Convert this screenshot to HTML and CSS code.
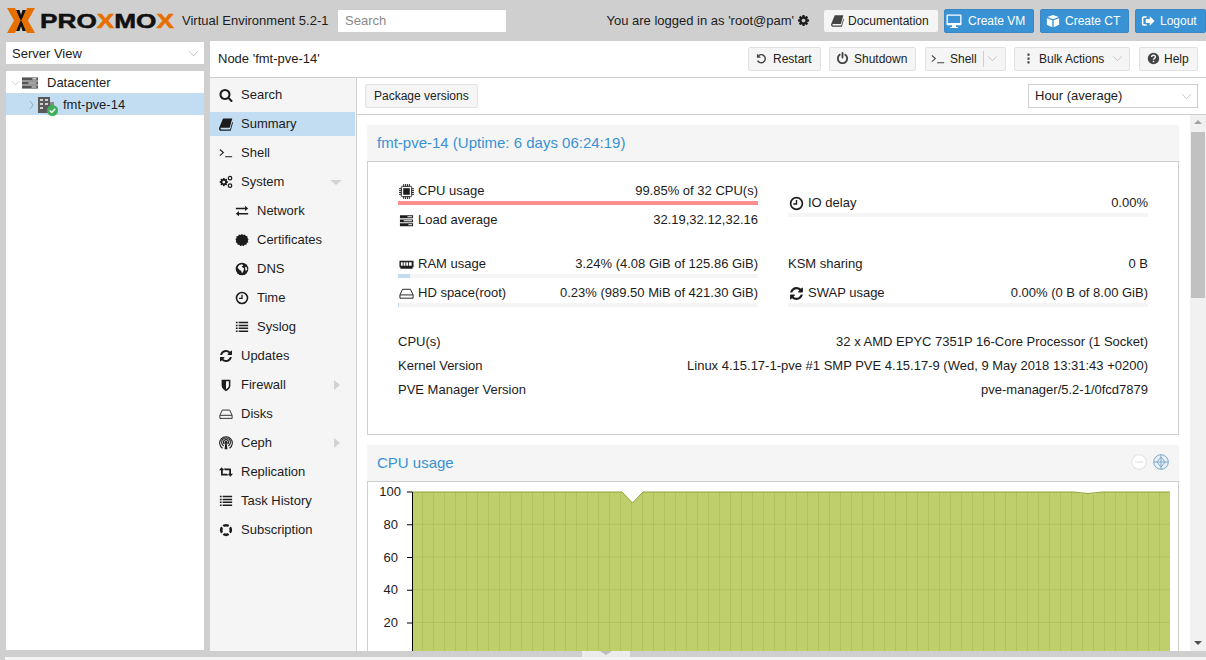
FILE: index.html
```html
<!DOCTYPE html>
<html lang="en">
<head>
<meta charset="utf-8">
<title>fmt-pve-14 - Proxmox Virtual Environment</title>
<link rel="stylesheet" href="styles.css">
</head>
<body>
<svg class="defs" aria-hidden="true">
  <defs>
    <symbol id="i-search" viewBox="0 0 1792 1792"><path d="M1216 832q0-185-131.5-316.5t-316.5-131.5-316.5 131.5-131.5 316.5 131.5 316.5 316.5 131.5 316.5-131.5 131.5-316.5zm512 832q0 52-38 90t-90 38q-54 0-90-38l-343-342q-179 124-399 124-143 0-273.5-55.5t-225-150-150-225-55.5-273.5 55.5-273.5 150-225 225-150 273.5-55.5 273.5 55.5 225 150 150 225 55.5 273.5q0 220-124 399l343 343q37 37 37 90z"/></symbol>
    <symbol id="i-cog" viewBox="0 0 1792 1792"><path d="M1152 896q0-106-75-181t-181-75-181 75-75 181 75 181 181 75 181-75 75-181zm512-109v222q0 12-8 23t-20 13l-185 28q-19 54-39 91 35 50 107 138 10 12 10 25t-9 23q-27 37-99 108t-94 71q-12 0-26-9l-138-108q-44 23-91 38-16 136-29 186-7 28-36 28h-222q-14 0-24.5-8.5t-11.5-21.5l-28-184q-49-16-90-37l-141 107q-10 9-25 9-14 0-25-11-126-114-165-168-7-10-7-23 0-12 8-23 15-21 51-66.5t54-70.5q-27-50-41-99l-183-27q-13-2-21-12.5t-8-23.5v-222q0-12 8-23t19-13l186-28q14-46 39-92-40-57-107-138-10-12-10-24 0-10 9-23 26-36 98.5-107.5t94.5-71.5q13 0 26 10l138 107q44-23 91-38 16-136 29-186 7-28 36-28h222q14 0 24.5 8.5t11.5 21.5l28 184q49 16 90 37l142-107q9-9 24-9 13 0 25 10 129 119 165 170 7 8 7 22 0 12-8 23-15 21-51 66.5t-54 70.5q26 50 41 98l183 28q13 2 21 12.5t8 23.5z"/></symbol>
    <symbol id="i-refresh" viewBox="0 0 1792 1792"><path d="M1639 1056q0 5-1 7-64 268-268 434.5t-478 166.5q-146 0-282.5-55t-243.5-157l-129 129q-19 19-45 19t-45-19-19-45v-448q0-26 19-45t45-19h448q26 0 45 19t19 45-19 45l-137 137q71 66 161 102t187 36q134 0 250-65t186-179q11-17 53-117 8-23 30-23h192q13 0 22.5 9.5t9.5 22.5zm25-800v448q0 26-19 45t-45 19h-448q-26 0-45-19t-19-45 19-45l138-138q-148-137-349-137-134 0-250 65t-186 179q-11 17-53 117-8 23-30 23h-199q-13 0-22.5-9.5t-9.5-22.5v-7q65-268 270-434.5t480-166.5q146 0 284 55.5t245 156.5l130-129q19-19 45-19t45 19 19 45z"/></symbol>
    <symbol id="i-power" viewBox="0 0 1792 1792"><path d="M1664 896q0 156-61 298t-164 245-245 164-298 61-298-61-245-164-164-245-61-298q0-182 80.5-343t226.5-270q43-32 95.5-25t83.5 50q32 42 24.5 94.5t-49.5 84.5q-98 74-151.5 181t-53.5 228q0 104 40.5 198.5t109.5 163.5 163.5 109.5 198.5 40.5 198.5-40.5 163.5-109.5 109.5-163.5 40.5-198.5q0-121-53.5-228t-151.5-181q-42-32-49.5-84.5t24.5-94.5q31-43 84-50t95 25q146 109 226.5 270t80.5 343zm-640-768v640q0 52-38 90t-90 38-90-38-38-90v-640q0-52 38-90t90-38 90 38 38 90z"/></symbol>
    <symbol id="i-undo" viewBox="0 0 16 16"><path d="M4.2 4.600A5 5 0 1 1 3.200 10.600" fill="none" stroke="currentColor" stroke-width="1.700"/><path d="M2.400 2.200v5h5z"/></symbol>
    <symbol id="i-book" viewBox="0 0 16 16"><path d="M4.600 1.600h10.600l-3 10.800H2c-.7 1.400.1 1.800 1 1.800h9.800l2.300-8.400.9.500-2.600 9.400H2.200C.4 15.700-.4 14 .2 12.200z"/></symbol>
    <symbol id="i-term" viewBox="0 0 16 16"><path d="M1 4l4 3.500L1 11M7 12.200h8" fill="none" stroke="currentColor" stroke-width="1.200"/></symbol>
    <symbol id="i-cogs" viewBox="0 0 16 16"><use href="#i-cog" width="11" height="11" x="0" y="2.500"/><circle cx="12.600" cy="3.600" r="2" fill="none" stroke="currentColor" stroke-width="1.400"/><circle cx="12.600" cy="12.200" r="2" fill="none" stroke="currentColor" stroke-width="1.400"/></symbol>
    <symbol id="i-exchange" viewBox="0 0 16 16"><path d="M1 4.200h10.500V2L15 5l-3.500 3V6H1zM15 10.200H4.500V8L1 11l3.500 3v-2H15z"/></symbol>
    <symbol id="i-cert" viewBox="0 0 16 16"><path d="M8 1l1.600 1.200 1.900-.6.800 1.800 2 .3-.1 2L15.500 7 14.600 8.800l.7 1.800-1.800.9-.4 2-2-.1L9.600 15 8 14l-1.600 1-1.500-1.600-2 .1-.4-2-1.800-.9.700-1.800L.500 7 1.800 5.700l-.1-2 2-.3.800-1.800 1.900.6z"/></symbol>
    <symbol id="i-globe" viewBox="0 0 16 16"><circle cx="8" cy="8" r="7.200"/><path d="M5 3.500l3-1 1.500 1.500-2 1.500 3 2-1 3-1.500 2.500-1-3-2.500-1.500-1.500-2.500zM11.500 5.500l2 .5.500 3-2 1z" fill="#f5f5f5"/></symbol>
    <symbol id="i-clock" viewBox="0 0 16 16"><circle cx="8" cy="8" r="6.300" fill="none" stroke="currentColor" stroke-width="1.800"/><path d="M8 4.200v4.300H4.600" fill="none" stroke="currentColor" stroke-width="1.500"/></symbol>
    <symbol id="i-list" viewBox="0 0 16 16"><path d="M1 2h2v1.800H1zM4.200 2H15v1.800H4.200zM1 5.300h2v1.800H1zM4.200 5.300H15v1.800H4.200zM1 8.600h2v1.800H1zM4.200 8.600H15v1.800H4.200zM1 11.900h2v1.800H1zM4.200 11.900H15v1.800H4.200z"/></symbol>
    <symbol id="i-shield" viewBox="0 0 16 16"><path d="M3 2h10v6.500c0 3.200-3 5.300-5 6.500-2-1.200-5-3.300-5-6.500z"/><path d="M8 3.800h3.300v4.700c0 2-1.800 3.400-3.300 4.400z" fill="#f5f5f5"/></symbol>
    <symbol id="i-hdd" viewBox="0 0 16 16"><path d="M3.800 3.500h8.400l2.800 6v3.500H1V9.500zM1.200 9.500h13.600M11 11.300h.1M13 11.300h.1" fill="none" stroke="currentColor" stroke-width="1"/></symbol>
    <symbol id="i-ceph" viewBox="0 0 16 16"><circle cx="8" cy="7.300" r="1.700"/><path d="M7.200 8.500h1.600l.9 6.500H6.300z"/><path d="M5.300 11.400A5 5 0 1 1 10.700 11.400M4 14A7.200 7.200 0 1 1 12 14M6.200 9.300a2.900 2.900 0 1 1 3.600 0" fill="none" stroke="currentColor" stroke-width="1.200"/></symbol>
    <symbol id="i-retweet" viewBox="0 0 16 16"><path d="M0 6l3-3.300L6 6H4.300v4H9l2 2H3.300a1 1 0 0 1-1-1V6zM16 10l-3 3.300L10 10h1.700V6H7L5 4h7.700a1 1 0 0 1 1 1v5z"/></symbol>
    <symbol id="i-support" viewBox="0 0 16 16"><circle cx="8" cy="8" r="5.500" fill="none" stroke="currentColor" stroke-width="3"/><path d="M3.500 1.800L6.300 5 5 6.300 1.800 3.500zM12.500 1.800L9.700 5 11 6.300l3.200-2.800zM3.500 14.200L6.300 11 5 9.700l-3.200 2.800zM12.500 14.200L9.700 11 11 9.700l3.200 2.800z" fill="#f5f5f5"/></symbol>
    <symbol id="i-question" viewBox="0 0 16 16"><circle cx="8" cy="8" r="7"/><path d="M5.700 6.300c0-3 4.700-3 4.700-.1 0 1.700-2.400 1.700-2.400 3.400" fill="none" stroke="#f5f5f5" stroke-width="1.700"/><path d="M7.100 10.800h1.800v1.800H7.100z" fill="#f5f5f5"/></symbol>
    <symbol id="i-dots" viewBox="0 0 16 16"><path d="M6.700 1.800h2.600v2.700H6.700zM6.700 6.700h2.600v2.700H6.700zM6.700 11.500h2.600v2.700H6.700z"/></symbol>
    <symbol id="i-desktop" viewBox="0 0 16 16"><path d="M1.500 1.500h13a1 1 0 0 1 1 1v8.800a1 1 0 0 1-1 1H9.700l.4 1.700h1.600v1H4.300v-1h1.600l.4-1.700H1.500a1 1 0 0 1-1-1V2.500a1 1 0 0 1 1-1zm.3 1.300v7.200h12.400V2.800z"/></symbol>
    <symbol id="i-cube" viewBox="0 0 16 16"><path d="M8 1l6.500 2.500L8 6 1.500 3.500zM1 4.800l6.200 2.400V15L1 12.200zM15 4.800L8.800 7.200V15l6.200-2.800z"/></symbol>
    <symbol id="i-signout" viewBox="0 0 16 16"><path d="M6.500 2.500H3a2 2 0 0 0-2 2v7a2 2 0 0 0 2 2h3.500v-1.700H3.400a.7.7 0 0 1-.7-.7V4.900c0-.4.300-.7.700-.7h3.100z"/><path d="M10 2.700L15.500 8 10 13.300V10.300H5.500V5.700H10z"/></symbol>
    <symbol id="i-chip" viewBox="0 0 16 16"><rect x="2.500" y="2.500" width="11" height="11" rx="1" fill="none" stroke="currentColor" stroke-width="1"/><rect x="4.500" y="4.500" width="7" height="7"/><path d="M5 0v2.500M7 0v2.500M9 0v2.500M11 0v2.500M5 13.500V16M7 13.500V16M9 13.500V16M11 13.500V16M0 5h2.500M0 7h2.500M0 9h2.500M0 11h2.500M13.500 5H16M13.500 7H16M13.500 9H16M13.500 11H16" stroke="currentColor" stroke-width="1" fill="none"/></symbol>
    <symbol id="i-tasks" viewBox="0 0 16 16"><path d="M1 2.500h14v3H1zM1 6.800h14v3H1zM1 11h14v3H1z"/><path d="M9 3.400h5v1.200H9zM5 7.700h9v1.200H5zM10 11.900h4v1.200h-4z" fill="#fff"/></symbol>
    <symbol id="i-memory" viewBox="0 0 16 16"><path d="M.5 4h15v7h-1v1.500h-13V11h-1zM2 5.500v3.800h2V5.500zm2.900 0v3.800h2V5.500zm2.900 0v3.800h2V5.500zm2.900 0v3.800h2.800V5.500z"/></symbol>
    <symbol id="i-server" viewBox="0 0 20 16"><rect x="0" y="1" width="20" height="4" fill="#555"/><rect x="0" y="6" width="20" height="4" fill="#555"/><rect x="0" y="11" width="20" height="4" fill="#555"/><path d="M13 2.200h5v1.400h-5zM8 7.300h10v1.400H8zM12 12.300h6v1.400h-6z" fill="#f0f0f0"/></symbol>
    <symbol id="i-node" viewBox="0 0 16 16"><rect x="0" y="0" width="12" height="16" fill="#5a5a5a"/><path d="M2 2h3v2H2zM7 2h3v2H7zM2 6h3v2H2zM7 6h3v2H7zM2 10h3v2H2z" fill="#cfcfcf"/><rect x="12" y="5" width="4" height="11" fill="#8a8a8a"/></symbol>
  </defs>
</svg>

<div class="app">
  <header class="top">
    <div class="logo">
      <svg class="logo-x" viewBox="0 0 28 25" aria-hidden="true">
        <path class="lx-k" d="M9 2h3.500L19 23h-3.500zM15.500 2H19L12.500 23H9z"/>
        <path class="lx-o" d="M0 0h8L14 12.500 8 25H0L7 12.500zM28 0h-8L14 12.500 20 25H28L21 12.500z"/>
        <path class="lx-k" d="M11.500 7.500h5L14 12.500zM11.500 17.500h5L14 12.500z"/>
      </svg>
      <span class="logo-word">PRO<b>X</b>MO<b>X</b></span>
    </div>
    <span class="version">Virtual Environment 5.2-1</span>
    <div class="top-search">Search</div>
    <span class="top-spacer"></span>
    <span class="login">You are logged in as 'root@pam'</span>
    <svg class="ico login-cog"><use href="#i-cog"/></svg>
    <a class="btn btn-doc"><svg class="ico"><use href="#i-book"/></svg>Documentation</a>
    <a class="btn-blue b-vm"><svg class="ico ico-l"><use href="#i-desktop"/></svg>Create VM</a>
    <a class="btn-blue b-ct"><svg class="ico"><use href="#i-cube"/></svg>Create CT</a>
    <a class="btn-blue b-out"><svg class="ico"><use href="#i-signout"/></svg>Logout</a>
  </header>

  <div class="workspace">
    <aside class="left">
      <div class="view-combo"><span>Server View</span><svg class="chev" viewBox="0 0 12 8"><path d="M1 1.500l5 5 5-5"/></svg></div>
      <div class="tree">
        <div class="tree-row">
          <svg class="chev tree-chev" viewBox="0 0 12 8"><path d="M1 1.500l5 5 5-5"/></svg>
          <svg class="ico-dc"><use href="#i-server"/></svg>
          <span>Datacenter</span>
        </div>
        <div class="tree-row tree-sel">
          <svg class="tree-arrow" viewBox="0 0 6 12"><path d="M1 1l4 5-4 5"/></svg>
          <span class="node-ico">
            <svg class="ico-node"><use href="#i-node"/></svg>
            <svg class="node-ok" viewBox="0 0 10 10"><circle cx="5" cy="5" r="5"/><path d="M2.500 5l1.800 1.800 3.200-3.300"/></svg>
          </span>
          <span>fmt-pve-14</span>
        </div>
      </div>
    </aside>

    <main class="main">
      <div class="main-head">
        <span class="node-title">Node 'fmt-pve-14'</span>
        <div class="actions">
          <a class="btn a-restart"><svg class="ico"><use href="#i-undo"/></svg>Restart</a>
          <a class="btn a-shutdown"><svg class="ico"><use href="#i-power"/></svg>Shutdown</a>
          <a class="btn a-shell"><svg class="ico"><use href="#i-term"/></svg>Shell<i class="split"></i><svg class="chev" viewBox="0 0 12 8"><path d="M1 1.500l5 5 5-5"/></svg></a>
          <a class="btn a-bulk"><svg class="ico"><use href="#i-dots"/></svg>Bulk Actions<svg class="chev" viewBox="0 0 12 8"><path d="M1 1.500l5 5 5-5"/></svg></a>
          <a class="btn a-help"><svg class="ico"><use href="#i-question"/></svg>Help</a>
        </div>
      </div>

      <div class="main-body">
        <nav class="nav">
          <a class="nav-item"><svg class="ico"><use href="#i-search"/></svg>Search</a>
          <a class="nav-item is-active"><svg class="ico"><use href="#i-book"/></svg>Summary</a>
          <a class="nav-item"><svg class="ico"><use href="#i-term"/></svg>Shell</a>
          <a class="nav-item"><svg class="ico"><use href="#i-cogs"/></svg>System<i class="tri tri-down"></i></a>
          <a class="nav-item sub"><svg class="ico"><use href="#i-exchange"/></svg>Network</a>
          <a class="nav-item sub"><svg class="ico"><use href="#i-cert"/></svg>Certificates</a>
          <a class="nav-item sub"><svg class="ico"><use href="#i-globe"/></svg>DNS</a>
          <a class="nav-item sub"><svg class="ico"><use href="#i-clock"/></svg>Time</a>
          <a class="nav-item sub"><svg class="ico"><use href="#i-list"/></svg>Syslog</a>
          <a class="nav-item"><svg class="ico"><use href="#i-refresh"/></svg>Updates</a>
          <a class="nav-item"><svg class="ico"><use href="#i-shield"/></svg>Firewall<i class="tri tri-right"></i></a>
          <a class="nav-item"><svg class="ico"><use href="#i-hdd"/></svg>Disks</a>
          <a class="nav-item"><svg class="ico"><use href="#i-ceph"/></svg>Ceph<i class="tri tri-right"></i></a>
          <a class="nav-item"><svg class="ico"><use href="#i-retweet"/></svg>Replication</a>
          <a class="nav-item"><svg class="ico"><use href="#i-list"/></svg>Task History</a>
          <a class="nav-item"><svg class="ico"><use href="#i-support"/></svg>Subscription</a>
        </nav>

        <section class="content">
          <div class="toolbar">
            <a class="btn btn-pkg">Package versions</a>
            <div class="range-combo"><span>Hour (average)</span><svg class="chev" viewBox="0 0 12 8"><path d="M1 1.500l5 5 5-5"/></svg></div>
          </div>
          <div class="scroller">
            <div class="pane">
              <div class="panel">
                <h2 class="panel-title">fmt-pve-14 (Uptime: 6 days 06:24:19)</h2>
                <div class="panel-body summary">
                  <div class="stats">
                    <div class="stat-col">
                      <div class="stat"><div class="stat-line"><span class="lbl"><svg class="ico"><use href="#i-chip"/></svg>CPU usage</span><span>99.85% of 32 CPU(s)</span></div><div class="bar"><div class="fill fill-red"></div></div></div>
                      <div class="stat"><div class="stat-line"><span class="lbl"><svg class="ico"><use href="#i-tasks"/></svg>Load average</span><span>32.19,32.12,32.16</span></div></div>
                    </div>
                    <div class="stat-col stat-col-mid">
                      <div class="stat"><div class="stat-line"><span class="lbl"><svg class="ico"><use href="#i-clock"/></svg>IO delay</span><span>0.00%</span></div><div class="bar"></div></div>
                    </div>
                    <div class="stat-col">
                      <div class="stat"><div class="stat-line"><span class="lbl"><svg class="ico"><use href="#i-memory"/></svg>RAM usage</span><span>3.24% (4.08 GiB of 125.86 GiB)</span></div><div class="bar"><div class="fill fill-ram"></div></div></div>
                      <div class="stat"><div class="stat-line"><span class="lbl"><svg class="ico"><use href="#i-hdd"/></svg>HD space(root)</span><span>0.23% (989.50 MiB of 421.30 GiB)</span></div><div class="bar"><div class="fill fill-hd"></div></div></div>
                    </div>
                    <div class="stat-col">
                      <div class="stat"><div class="stat-line"><span>KSM sharing</span><span>0 B</span></div></div>
                      <div class="stat"><div class="stat-line"><span class="lbl"><svg class="ico"><use href="#i-refresh"/></svg>SWAP usage</span><span>0.00% (0 B of 8.00 GiB)</span></div><div class="bar"></div></div>
                    </div>
                  </div>
                  <div class="info">
                    <div class="info-row"><span>CPU(s)</span><span>32 x AMD EPYC 7351P 16-Core Processor (1 Socket)</span></div>
                    <div class="info-row"><span>Kernel Version</span><span>Linux 4.15.17-1-pve #1 SMP PVE 4.15.17-9 (Wed, 9 May 2018 13:31:43 +0200)</span></div>
                    <div class="info-row"><span>PVE Manager Version</span><span>pve-manager/5.2-1/0fcd7879</span></div>
                  </div>
                </div>
              </div>

              <div class="panel">
                <div class="panel-head">
                  <h2 class="panel-title-text">CPU usage</h2>
                  <div class="zoom-tools">
                    <svg class="zt zt-off" viewBox="0 0 16 16"><circle cx="8" cy="8" r="7.300"/><path d="M3.500 8h9"/></svg>
                    <svg class="zt zt-on" viewBox="0 0 16 16"><circle cx="8" cy="8" r="7.300"/><path d="M8 .7v14.600M.7 8h14.600M8 3l4 5-4 5-4-5z"/></svg>
                  </div>
                </div>
                <div class="panel-body chart-body">
                  <svg class="chart" viewBox="0 0 811 300" width="811" height="300">
                    <defs>
                      <pattern id="grid" x="44" y="10" width="11" height="32.750" patternUnits="userSpaceOnUse">
                        <path class="grid-line" d="M11 0v32.750M0 32.750h11"/>
                      </pattern>
                    </defs>
                    <path class="plot-fill" d="M44 10H254L264.500 21 275 10H706q14 3 28 0H802V300H44z"/>
                    <path class="plot-grid" d="M44 10H254L264.500 21 275 10H706q14 3 28 0H802V300H44z" fill="url(#grid)"/>
                    <path class="plot-top" d="M44 10H254L264.500 21 275 10H706q14 3 28 0H802"/>
                    <path class="axis" d="M44.500 10V300M39 10h5M39 42.750h5M39 75.500h5M39 108.250h5M39 141h5M39 173.750h5"/>
                    <text class="tick" x="33" y="14">100</text>
                    <text class="tick" x="30" y="47">80</text>
                    <text class="tick" x="30" y="80">60</text>
                    <text class="tick" x="30" y="112">40</text>
                    <text class="tick" x="30" y="145">20</text>
                    <text class="tick" x="30" y="178">0</text>
                  </svg>
                </div>
              </div>
            </div>
            <div class="scrollbar">
              <i class="sb-up"></i>
              <div class="sb-thumb"></div>
              <i class="sb-down"></i>
            </div>
          </div>
        </section>
      </div>
    </main>
  </div>

  <footer class="foot"><span class="foot-tool"><i></i></span></footer>
</div>
</body>
</html>
```
FILE: styles.css
```css
* { box-sizing: border-box; }
html, body { margin: 0; height: 100%; overflow: hidden; }
body { font: 13px/16px "Liberation Sans", Arial, sans-serif; color: #1c1c1c; background: #cfcfcf; }
.defs { position: absolute; width: 0; height: 0; }
a { color: inherit; text-decoration: none; }
.ico { width: 14px; height: 14px; fill: currentColor; flex: none; }
.chev { width: 11px; height: 7px; fill: none; stroke: #bdbdbd; stroke-width: 1; flex: none; }

.app { width: 1206px; height: 660px; display: flex; flex-direction: column; overflow: hidden; }

/* top bar */
.top { height: 41px; flex: none; display: flex; align-items: center; padding: 0 0 0 7px; }
.logo { display: flex; align-items: center; width: 175px; flex: none; }
.logo-x { width: 28px; height: 25px; flex: none; margin-top: -1px; }
.lx-o { fill: #e57000; }
.lx-k { fill: #111; }
.logo-word { font: 900 20px/24px "Liberation Sans", Arial, sans-serif; color: #111; margin-left: 5px; transform: scaleX(1.310); transform-origin: left center; -webkit-text-stroke: .5px #111; }
.logo-word b { color: #e57000; -webkit-text-stroke-color: #e57000; }
.version { width: 156px; flex: none; white-space: nowrap; }
.top-search { width: 168px; height: 22px; background: #fff; color: #8a8a8a; padding: 3px 7px; flex: none; }
.top-spacer { flex: 1; }
.login { white-space: nowrap; }
.login-cog { margin: 0 14px 0 3px; width: 13px; height: 13px; }
.btn { display: inline-flex; align-items: center; height: 24px; font-size: 12px; padding: 0 7px; background: #f5f5f5; border: 1px solid #e2e2e2; border-radius: 2px; white-space: nowrap; color: #222; flex: none; }
.btn .ico { margin-right: 6px; width: 13px; height: 13px; color: #444; }
.btn-doc { width: 114px; height: 22px; padding-left: 7px; border: 0; margin-right: 6px; }
.btn-doc .ico { margin-right: 4px; }
.btn-pkg { width: 113px; padding: 0 8px; }
.btn-blue { display: inline-flex; align-items: center; height: 24px; padding-left: 7px; font-size: 12px; background: #3892d4; color: #fff; border-radius: 2px; flex: none; white-space: nowrap; margin-right: 6px; border: 1px solid #3a87c4; }
.btn-blue .ico { width: 14px; height: 14px; margin-right: 5px; }
.btn-blue .ico-l { width: 16px; height: 16px; margin-right: 6px; }
.b-vm { width: 90px; padding-left: 1px; }
.b-ct { width: 89px; padding-left: 5px; }
.b-out { width: 71px; margin-right: 0; padding-left: 5px; }

/* layout */
.workspace { flex: 1; min-height: 0; display: flex; }
.left { width: 198px; margin: 0 0 1px 6px; flex: none; display: flex; flex-direction: column; }
.view-combo { height: 22px; margin-top: 1px; background: #fff; display: flex; align-items: center; justify-content: space-between; padding: 1px 5px 0 6px; flex: none; }
.tree { flex: 1; margin-top: 7px; background: #fff; }
.tree-row { height: 22px; display: flex; align-items: center; padding-top: 1px; white-space: nowrap; }
.tree-chev { width: 9px; height: 6px; margin: 1px 0 0 5px; }
.ico-dc { width: 16px; height: 14px; margin: 0 9px 0 2px; flex: none; }
.tree-sel { background: #c2ddf2; padding-left: 23px; }
.tree-arrow { width: 5px; height: 10px; fill: none; stroke: #8fa0ad; stroke-width: 1; flex: none; margin-right: 4px; }
.node-ico { position: relative; width: 16px; height: 16px; margin-right: 9px; flex: none; }
.ico-node { width: 16px; height: 16px; display: block; }
.node-ok { position: absolute; right: -4px; bottom: -3px; width: 11px; height: 11px; fill: #3fae5a; }
.node-ok path { fill: none; stroke: #fff; stroke-width: 1.300; }

.main { width: 996px; margin-left: 6px; flex: none; display: flex; flex-direction: column; background: #fff; }
.main-head { height: 37px; flex: none; display: flex; align-items: center; justify-content: space-between; border-bottom: 1px solid #cfcfcf; padding: 0 8px; }
.actions { display: flex; align-items: center; gap: 8px; margin-top: -1px; }
.a-restart { width: 73px; padding-left: 6px; }
.a-restart .ico { margin-right: 5px; }
.a-shutdown { width: 87px; padding-left: 6px; }
.a-shutdown .ico { margin-right: 5px; }
.a-shell { width: 81px; padding-left: 5px; margin-left: 1px; }
.a-shell .ico { margin-right: 5px; width: 14px; height: 14px; }
.a-shell .split { width: 1px; height: 16px; background: #cfcfcf; margin: 0 4px 0 6px; }
.a-bulk { width: 116px; }
.a-bulk .ico { margin-right: 4px; }
.a-bulk .chev { margin-left: 8px; }
.a-help { width: 59px; margin-left: 1px; }
.a-help .ico { margin-right: 4px; }

.main-body { flex: 1; min-height: 0; display: flex; }
.nav { width: 147px; flex: none; background: #f5f5f5; border-right: 1px solid #cfcfcf; padding: 5px 1px 0 0; display: flex; flex-direction: column; gap: 5px; }
.nav-item { height: 24px; flex: none; display: flex; align-items: center; padding-left: 9px; position: relative; white-space: nowrap; }
.nav-item .ico { margin-right: 8px; color: #1c1c1c; }
.nav-item.sub { padding-left: 25px; }
.is-active { background: #c2ddf2; }
.tri { position: absolute; width: 0; height: 0; border-style: solid; border-color: transparent; }
.tri-down { right: 13px; top: 10px; border-width: 5px 6px 0 6px; border-top-color: #d2d2d2; }
.tri-right { right: 15px; top: 7px; border-width: 5px 0 5px 6px; border-left-color: #d2d2d2; }

.content { flex: 1; min-width: 0; display: flex; flex-direction: column; }
.toolbar { height: 37px; flex: none; display: flex; align-items: center; justify-content: space-between; border-bottom: 1px solid #cfcfcf; padding: 0 8px; }
.range-combo { width: 170px; height: 24px; border: 1px solid #cfcfcf; display: flex; align-items: center; justify-content: space-between; padding: 0 5px 0 6px; }
.scroller { flex: 1; min-height: 0; display: flex; overflow: hidden; }
.pane { flex: 1; min-width: 0; padding: 10px 11px 0 10px; overflow: hidden; }
.scrollbar { width: 16px; flex: none; background: #f1f1f1; display: flex; flex-direction: column; align-items: center; position: relative; }
.sb-up, .sb-down { width: 0; height: 0; border-style: solid; border-color: transparent; position: absolute; left: 4px; }
.sb-up { top: 5px; border-width: 0 4px 4px 4px; border-bottom-color: #a3a3a3; }
.sb-down { bottom: 6px; border-width: 4px 4px 0 4px; border-top-color: #505050; }
.sb-thumb { width: 14px; height: 166px; margin-top: 17px; background: #c1c1c1; }

.panel { margin-bottom: 10px; }
.panel-title, .panel-title-text { font-size: 15px; line-height: 20px; font-weight: 400; color: #3892d4; margin: 0; }
.panel-title { height: 37px; background: #f5f5f5; border-bottom: 1px solid #cfcfcf; padding: 8px 10px; }
.panel-head { height: 37px; background: #f5f5f5; border-bottom: 1px solid #cfcfcf; padding: 8px 10px; display: flex; justify-content: space-between; }
.panel-body { border: 1px solid #cfcfcf; border-top: 0; background: #fff; }
.summary { height: 273px; padding: 14px 30px 0; }
.stats { display: grid; grid-template-columns: 360px 360px; column-gap: 30px; row-gap: 15px; }
.stat-col { height: 58px; }
.stat-col-mid { padding-top: 12px; }
.stat { height: 29px; }
.stat-line { height: 25px; display: flex; justify-content: space-between; align-items: center; padding-top: 5px; white-space: nowrap; }
.lbl { display: flex; align-items: center; }
.lbl .ico { margin: 0 4px 0 1px; width: 15px; height: 15px; }
.bar { height: 4px; background: #f5f5f5; }
.fill { height: 4px; }
.fill-red { width: 100%; background: #ff8f8f; }
.fill-ram { width: 3.240%; background: #c2ddf2; }
.fill-hd { width: 1px; background: #c2ddf2; }
.info { margin-top: 22px; }
.info-row { height: 24px; display: flex; justify-content: space-between; align-items: center; padding-top: 2px; white-space: nowrap; }
.zoom-tools { display: flex; gap: 6px; margin-top: 1px; }
.zt { width: 16px; height: 16px; fill: #fff; stroke-width: 1; }
.zt-off { stroke: #dcdfe2; }
.zt-on { stroke: #7da7cc; fill: #e8f1f8; }
.chart-body { height: 300px; overflow: hidden; }
.chart { display: block; }
.plot-fill { fill: #bfcf6c; }
.grid-line { fill: none; stroke: #a3b650; stroke-width: 1; }
.plot-top { fill: none; stroke: #8fa33a; stroke-width: 1; }
.axis { fill: none; stroke: #000; stroke-width: 1; }
.tick { font: 13px "Liberation Sans", Arial, sans-serif; text-anchor: end; fill: #222; }

.foot { height: 9px; margin-left: 5px; flex: none; position: relative; background: linear-gradient(#cfcfcf 6px, #f5f5f5 6px); }
.foot-tool { position: absolute; left: 577px; top: 0; width: 48px; height: 6px; background: #ececec; display: flex; justify-content: center; }
.foot-tool i { width: 0; height: 0; border-style: solid; border-color: transparent; border-width: 4px 6px 0; border-top-color: #bdbdbd; }
```
